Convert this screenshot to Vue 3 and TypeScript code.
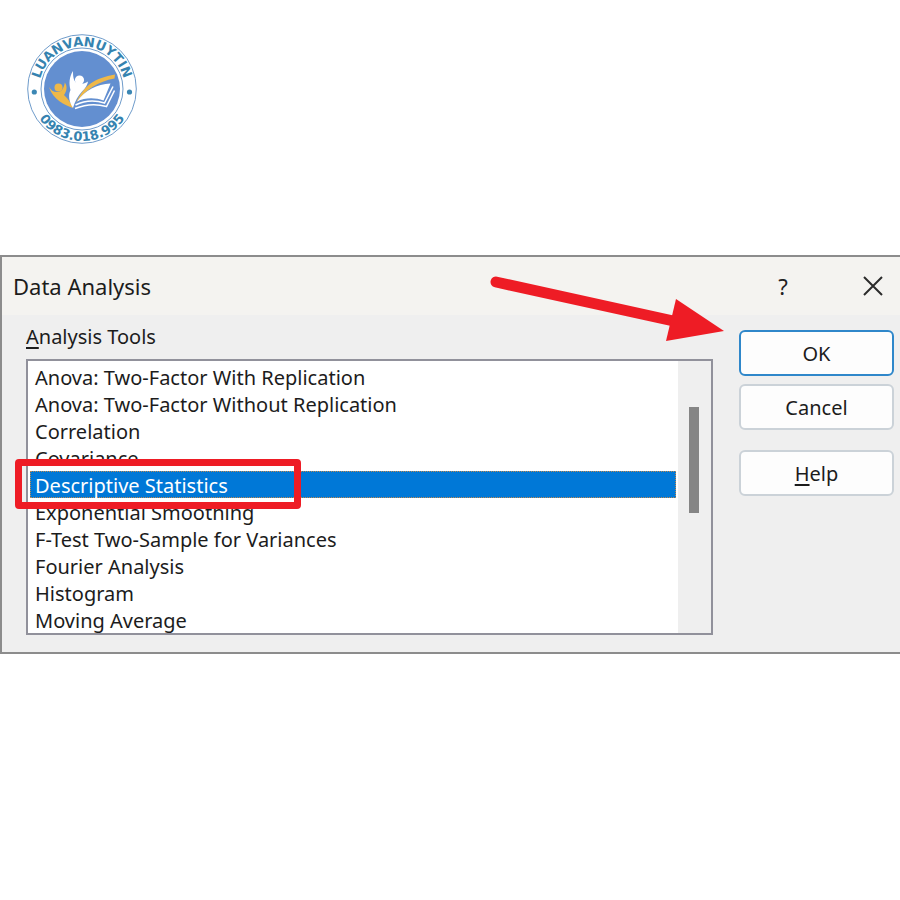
<script setup lang="ts">
import { ref } from 'vue'

const tools: string[] = [
  'Anova: Two-Factor With Replication',
  'Anova: Two-Factor Without Replication',
  'Correlation',
  'Covariance',
  'Descriptive Statistics',
  'Exponential Smoothing',
  'F-Test Two-Sample for Variances',
  'Fourier Analysis',
  'Histogram',
  'Moving Average',
]
const selected = ref<string>('Descriptive Statistics')
</script>

<template>
  <main class="page">
    <header class="brand">
      <svg class="logo" viewBox="0 0 110 110" role="img" aria-label="LUANVANUYTIN 0983.018.995">
        <defs>
          <path id="arc-top" d="M14.500 69.700A43 43 0 1 1 95.500 69.700" />
          <path id="arc-bottom" d="M3 55A52 52 0 0 0 107 55" />
        </defs>
        <circle cx="55" cy="55" r="54.300" fill="#fff" stroke="#6f9ccb" stroke-width="1" />
        <circle cx="55" cy="55" r="41" fill="#fff" stroke="#6f9ccb" stroke-width="1" />
        <circle cx="55" cy="55" r="38" fill="#638fd0" />
        <circle cx="7.300" cy="58" r="2.600" fill="#3b87b4" />
        <circle cx="102.500" cy="58" r="2.600" fill="#3b87b4" />
        <text class="ring-text"><textPath href="#arc-top" startOffset="50%">LUANVANUYTIN</textPath></text>
        <text class="ring-text"><textPath href="#arc-bottom" startOffset="50%">0983.018.995</textPath></text>
        <g fill="#efb848">
          <circle cx="31.500" cy="53.500" r="4" />
          <path d="M22 53C24 56 26 58 30 58C34.500 58.500 37 54 37.800 48.500C40.500 52 40 57 37 61C41 65 44.500 69 45.800 74C38 71 26 66 22 53Z" />
          <path d="M49 69C57 51 68 44 88 40.500L87.500 44.500C71 47.500 59 55 49 69Z" />
        </g>
        <g fill="#fff">
          <circle cx="52.500" cy="46" r="4.600" />
          <path d="M46 37C46 43 46.500 46 49 48.500C53 51 57 50 61 47.500C60.500 51 58.500 54 55 57.500C51 62 48 67 46 74C42 68 41 61 43.500 56C42 50 42 43 46 37Z" />
          <path d="M50 67.500C58 56 70 50 83.500 49.500L76.500 66.500C68 63.500 58 63.500 50 67.500Z" />
        </g>
        <path d="M48.500 71C59 65.800 68 66 77.500 69L86 52.500M48 74.500C60 69.500 69 69.500 79.500 72.500L87.500 56.500" fill="none" stroke="#fff" stroke-width="1.500" />
      </svg>
    </header>

    <section class="dialog" role="dialog" aria-labelledby="dialog-title">
      <div class="titlebar">
        <h1 id="dialog-title" class="title">Data Analysis</h1>
        <button class="caption" type="button" aria-label="Context help">?</button>
        <button class="caption" type="button" aria-label="Close">
          <svg class="close" viewBox="0 0 20 20" aria-hidden="true">
            <path d="M1 1L19 19M19 1L1 19" />
          </svg>
        </button>
      </div>

      <div class="content">
        <div class="tools">
          <label class="tools-label" for="analysis-tools"><u>A</u>nalysis Tools</label>
          <div class="listbox">
            <select id="analysis-tools" v-model="selected" class="list" size="10">
              <option v-for="tool in tools" :key="tool" :value="tool" class="item">{{ tool }}</option>
            </select>
            <div class="scrollbar" aria-hidden="true"><div class="thumb"></div></div>
            <div class="highlight" aria-hidden="true"></div>
          </div>
        </div>

        <div class="actions">
          <button class="button primary" type="button">OK</button>
          <button class="button" type="button">Cancel</button>
          <button class="button help" type="button"><span><u>H</u>elp</span></button>
        </div>
      </div>

      <svg class="arrow" viewBox="0 0 236 70" aria-hidden="true">
        <path d="M8 9L190 49" fill="none" stroke="#ee1c25" stroke-width="11" stroke-linecap="round" />
        <path d="M188 26L236 58L178 68Z" fill="#ee1c25" />
      </svg>
    </section>
  </main>
</template>

<style>
body {
  margin: 0;
  background: #fff;
}
</style>

<style scoped>
.page {
  font-family: "Noto Sans", "Open Sans", sans-serif;
  font-size: 20px;
  line-height: 27px;
  color: #1c1c1c;
}
.brand {
  padding: 34px 27px 111px;
}
.logo {
  display: block;
  width: 110px;
  height: 110px;
  overflow: visible;
}
.ring-text {
  fill: #3583b0;
  font-family: "DejaVu Sans", sans-serif;
  font-size: 13px;
  font-weight: 700;
  text-anchor: middle;
}
.dialog {
  position: relative;
  border: 2px solid #8c8c8c;
  border-right: 0;
  background: #efefef;
}
.titlebar {
  display: flex;
  align-items: center;
  height: 58px;
  padding-left: 11px;
  background: #f4f3f0;
}
.title {
  flex: 1;
  margin: 0;
  font-size: 22px;
  font-weight: 400;
}
.caption {
  display: flex;
  align-items: center;
  justify-content: center;
  width: 54px;
  height: 54px;
  margin-left: 36px;
  padding: 0;
  border: 0;
  background: none;
  font: inherit;
  font-size: 22px;
  color: #222;
}
.close {
  width: 20px;
  height: 20px;
  fill: none;
  stroke: #2b2b2b;
  stroke-width: 2;
}
.content {
  display: flex;
  align-items: flex-start;
  gap: 26px;
  padding: 8px 6px 17px 24px;
}
.tools {
  flex: 1;
  min-width: 0;
}
.tools-label {
  display: block;
  margin-bottom: 9px;
}
u {
  text-decoration-thickness: 2px;
  text-underline-offset: 3px;
}
.listbox {
  position: relative;
  display: flex;
  border: 2px solid #91919b;
  background: #fff;
}
.list {
  flex: 1;
  min-width: 0;
  height: 272px;
  padding: 2px;
  border: 0;
  border-radius: 0;
  outline: 0;
  background: #fff;
  color: inherit;
  font: inherit;
  overflow: hidden;
  scrollbar-width: none;
}
.item {
  box-sizing: border-box;
  height: 27px;
  min-height: 27px;
  padding: 0 4px;
  border: 1px dotted transparent;
  font-size: 20px;
  line-height: 26px;
}
.item:checked {
  border-color: #c08a50;
  background: #0078d7 linear-gradient(#0078d7, #0078d7);
  color: #fff;
}
.scrollbar {
  box-sizing: border-box;
  width: 33px;
  padding: 46px 12px 0 11px;
  background: #efefef;
}
.thumb {
  height: 106px;
  background: #858585;
}
.highlight {
  position: absolute;
  top: 98px;
  left: -13px;
  box-sizing: border-box;
  width: 286px;
  height: 50px;
  border: 7px solid #ee1c25;
  border-radius: 4px;
  pointer-events: none;
}
.actions {
  display: flex;
  flex-direction: column;
  gap: 8px;
  width: 155px;
  padding-top: 7px;
}
.button {
  height: 46px;
  padding: 0;
  border: 2px solid #cbd2d8;
  border-radius: 6px;
  background: #fdfdfd;
  color: inherit;
  font: inherit;
}
.primary {
  border-color: #2f87ca;
}
.help {
  margin-top: 12px;
}
.arrow {
  position: absolute;
  top: 16px;
  right: 176px;
  width: 236px;
  height: 70px;
  pointer-events: none;
}
</style>
